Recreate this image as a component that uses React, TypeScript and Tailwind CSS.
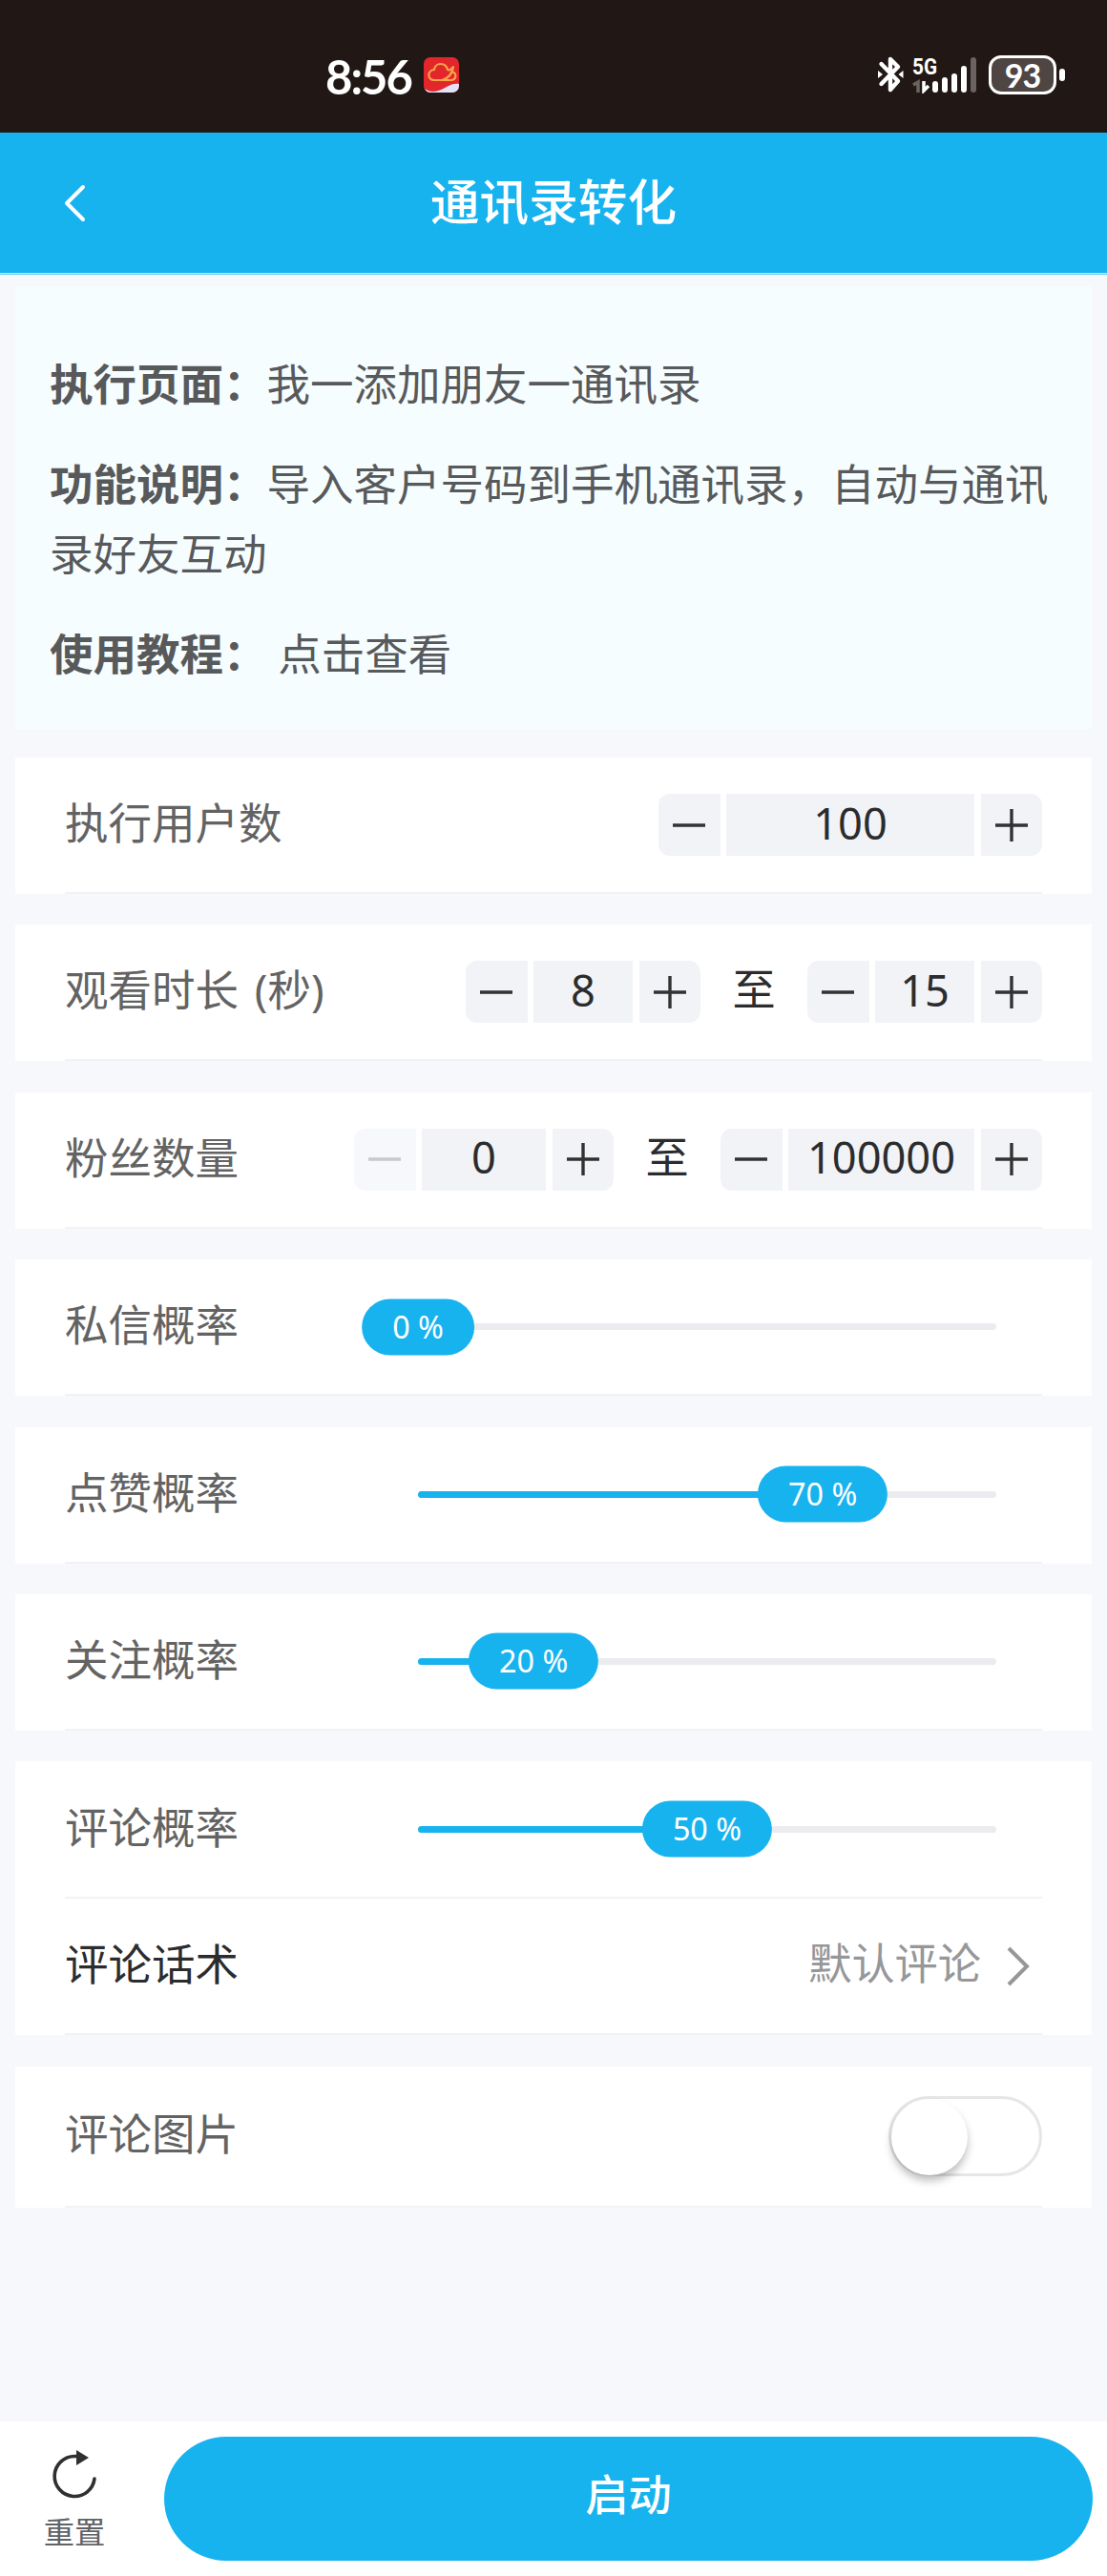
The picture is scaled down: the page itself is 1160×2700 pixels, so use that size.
import { useState } from "react";
import type { ReactNode } from "react";

const sliders = [
  { label: "私信概率", value: 0 },
  { label: "点赞概率", value: 70 },
  { label: "关注概率", value: 20 },
];

function StatusBar() {
  return (
    <div className="flex h-[139px] items-start justify-between bg-[#211815] text-white">
      <div className="flex pl-[341px] pt-[58px]">
        <span className="w-[92px] whitespace-nowrap font-['Lato'] text-[49px] font-bold leading-[44px] tracking-[-2px]">8:56</span>
        <svg className="ml-[11px] mt-[2px]" width="37" height="37" viewBox="0 0 37 37">
          <rect width="37" height="37" rx="7" fill="#e3262b" />
          <path d="M1 33 C8 38 16 36 24 31 C29 28 33 27 37 28 V30 a7 7 0 0 1 -7 7 H7 Q3 37 1 33Z" fill="#e3e2f8" />
          <path
            d="M19 24 C26 22 30 18 31 10 C28 13 27 14 25 13 C23 5 12 5 11 13 C3 14 4 24 11 24 H28 C35 24 35 16 29 15"
            fill="none"
            stroke="#f7a64a"
            strokeWidth="2.2"
            strokeLinejoin="round"
          />
        </svg>
      </div>
      <div className="flex pr-[44px] pt-[58px]">
        <svg width="27" height="40" viewBox="0 0 27 40" fill="none" stroke="#fff" strokeWidth="4.4" strokeLinecap="round" strokeLinejoin="round">
          <path d="M3.5 9 L21 27 L13 36 V4 L21 12 L3.5 30" />
          <path d="M0 16 L5 20 L0 24Z M26.5 16 L21.5 20 L26.5 24Z" fill="#fff" stroke="none" />
        </svg>
        <svg className="ml-[8px]" width="70" height="40" viewBox="0 0 70 40">
          <text x="1" y="20" fill="#fff" fontFamily="Roboto" fontWeight="700" fontSize="24" textLength="26" lengthAdjust="spacingAndGlyphs">5G</text>
          <path d="M2 31 L7 28 V39" fill="none" stroke="#6b6361" strokeWidth="3.5" />
          <path d="M13 27 V37 L18 32" fill="none" stroke="#fff" strokeWidth="3.5" />
          <rect x="22" y="27" width="6" height="12" rx="3" fill="#fff" />
          <rect x="32" y="23" width="6" height="16" rx="3" fill="#fff" />
          <rect x="42" y="19" width="6" height="20" rx="3" fill="#fff" />
          <rect x="52" y="11" width="6" height="28" rx="3" fill="#fff" />
          <rect x="62" y="2" width="6" height="37" rx="3" fill="#6b6361" />
        </svg>
        <div className="ml-[11px] flex h-[41px] w-[71px] items-center justify-center rounded-[13px] border-[3px] border-white bg-[#4f4644] font-['Lato'] text-[34px] font-bold leading-none tracking-[-1px]">
          93
        </div>
        <div className="ml-[3px] mt-[14px] h-[13px] w-[6px] rounded-[3px] bg-white" />
      </div>
    </div>
  );
}

function Card({ children, className = "h-[143px]" }: { children: ReactNode; className?: string }) {
  return <section className={`bg-white px-[52px] ${className}`}>{children}</section>;
}

function Row({ label, children, dark = false }: { label: string; children: ReactNode; dark?: boolean }) {
  return (
    <div className="flex h-full items-center justify-between border-b-2 border-[#f1f2f4]">
      <span className={`pb-[5px] text-[45.5px] leading-[60px] [word-spacing:5px] ${dark ? "text-[#2b2c2e]" : "text-[#636363]"}`}>{label}</span>
      {children}
    </div>
  );
}

function Sign({ plus = false, disabled = false }: { plus?: boolean; disabled?: boolean }) {
  return (
    <svg width="34" height="34" viewBox="0 0 34 34" fill="none" stroke={disabled ? "#c8c9cc" : "#323233"} strokeWidth="3.4">
      <path d={plus ? "M0 17 H34 M17 0 V34" : "M0 17 H34"} />
    </svg>
  );
}

// width is the class of the input between the two buttons
function Stepper({ initial, width }: { initial: number; width: string }) {
  const [value, setValue] = useState(initial);
  const disabled = value === 0;
  return (
    <div className="flex h-[65px] gap-[6.5px]">
      <button
        onClick={() => setValue(Math.max(0, value - 1))}
        className={`flex w-[64.5px] items-center justify-center rounded-l-[12px] ${disabled ? "bg-[#f7f8fb]" : "bg-[#f2f3f6]"}`}
      >
        <Sign disabled={disabled} />
      </button>
      <div className={`flex items-center justify-center bg-[#f2f3f6] pb-[4px] text-[45.2px] leading-[60px] text-[#2b2c2e] ${width}`}>{value}</div>
      <button onClick={() => setValue(value + 1)} className="flex w-[64.5px] items-center justify-center rounded-r-[12px] bg-[#f2f3f6]">
        <Sign plus />
      </button>
    </div>
  );
}

function Range({ children }: { children: ReactNode }) {
  return <div className="flex items-center">{children}</div>;
}

function To() {
  return <span className="w-[112px] pb-[5px] text-center text-[45.2px] leading-[60px] text-[#2b2c2e]">至</span>;
}

function Slider({ value }: { value: number }) {
  return (
    <div className="relative mr-[48px] h-[7px] w-[606px] rounded-full bg-[#ebecef]">
      <div className="h-full rounded-full bg-[#17b3ef]" style={{ width: `${value}%` }} />
      <div
        className="absolute top-1/2 -translate-x-1/2 -translate-y-1/2 whitespace-nowrap rounded-full bg-[#17b3ef] px-[32px] pb-[2px] text-[32.3px] leading-[57px] text-white"
        style={{ left: `${value}%` }}
      >
        {value} %
      </div>
    </div>
  );
}

export default function App() {
  const [checked, setChecked] = useState(false);

  return (
    <main className="flex h-[2700px] w-[1160px] flex-col bg-[#f6f8fc] font-['Noto_Sans','Noto_Sans_CJK_SC',sans-serif]">
      <StatusBar />

      <header className="flex h-[149px] items-center border-b border-[#6fd0f3] bg-[#17b3ef] px-[66px] text-white shadow-[inset_0_-1px_0_#b5e9fb]">
        <svg width="24" height="40" viewBox="0 0 24 40" fill="none" stroke="currentColor" strokeWidth="4" strokeLinecap="round" strokeLinejoin="round">
          <path d="M21 3 L4 20 L21 37" />
        </svg>
        <h1 className="flex-1 pb-[4px] pr-[24px] text-center text-[51.6px] font-medium leading-[70px]">通讯录转化</h1>
      </header>

      <div className="px-[16px] pt-[12px]">
        <section className="h-[464px] space-y-[32px] bg-[#f5fdff] px-[36px] pt-[66px] text-[45.5px] leading-[73px] text-[#58595b]">
          <p><b>执行页面：</b>我一添加朋友一通讯录</p>
          <p><b>功能说明：</b>导入客户号码到手机通讯录，自动与通讯录好友互动</p>
          <p><b>使用教程：</b> 点击查看</p>
        </section>
      </div>

      <div className="flex flex-1 flex-col gap-[32.4px] px-[16px] pt-[30px]">
        <Card>
          <Row label="执行用户数">
            <Stepper initial={100} width="w-[260px]" />
          </Row>
        </Card>
        <Card>
          <Row label="观看时长 (秒)">
            <Range>
              <Stepper initial={8} width="w-[104px]" />
              <To />
              <Stepper initial={15} width="w-[104px]" />
            </Range>
          </Row>
        </Card>
        <Card>
          <Row label="粉丝数量">
            <Range>
              <Stepper initial={0} width="w-[130px]" />
              <To />
              <Stepper initial={100000} width="w-[195px]" />
            </Range>
          </Row>
        </Card>
        {sliders.map((s) => (
          <Card key={s.label}>
            <Row label={s.label}>
              <Slider value={s.value} />
            </Row>
          </Card>
        ))}
        <Card className="grid h-[287px] grid-rows-2">
          <Row label="评论概率">
            <Slider value={50} />
          </Row>
          <Row label="评论话术" dark>
            <div className="flex items-center pr-[11px] text-[#969799]">
              <span className="pb-[5px] text-[45.2px] leading-[60px]">默认评论</span>
              <svg className="ml-[25px]" width="28" height="42" viewBox="0 0 28 42" fill="none" stroke="currentColor" strokeWidth="4">
                <path d="M4 2 L23 21 L4 40" />
              </svg>
            </div>
          </Row>
        </Card>
        <Card className="h-[148px]">
          <Row label="评论图片">
            <button onClick={() => setChecked(!checked)} className={`flex h-[84px] w-[161px] rounded-full border-[3px] border-[#e6e6e6] ${checked ? "justify-end bg-[#17b3ef]" : "bg-white"}`}>
              <span className="h-[80px] w-[80px] rounded-full bg-white shadow-[0_6px_8px_rgba(0,0,0,0.25)]" />
            </button>
          </Row>
        </Card>
      </div>

      <footer className="flex h-[162px] items-start bg-white pr-[15px] pt-[16px]">
        <button className="flex w-[172px] flex-col items-center pr-[16px] pt-[12px] text-[#606266]">
          <svg width="50" height="54" viewBox="0 0 50 54" fill="none">
            <path d="M28 8.5 H25.5 A21 21 0 1 0 46 32" stroke="#2f3031" strokeWidth="3.6" strokeLinecap="round" />
            <path d="M27 2 L40 10 L27 18Z" fill="#2f3031" />
          </svg>
          <span className="mt-[11px] text-[32.3px] leading-[44px]">重置</span>
        </button>
        <button className="h-[130px] flex-1 rounded-full bg-[#17b3ef] pb-[8px] text-[45.2px] font-medium text-white">启动</button>
      </footer>
    </main>
  );
}
